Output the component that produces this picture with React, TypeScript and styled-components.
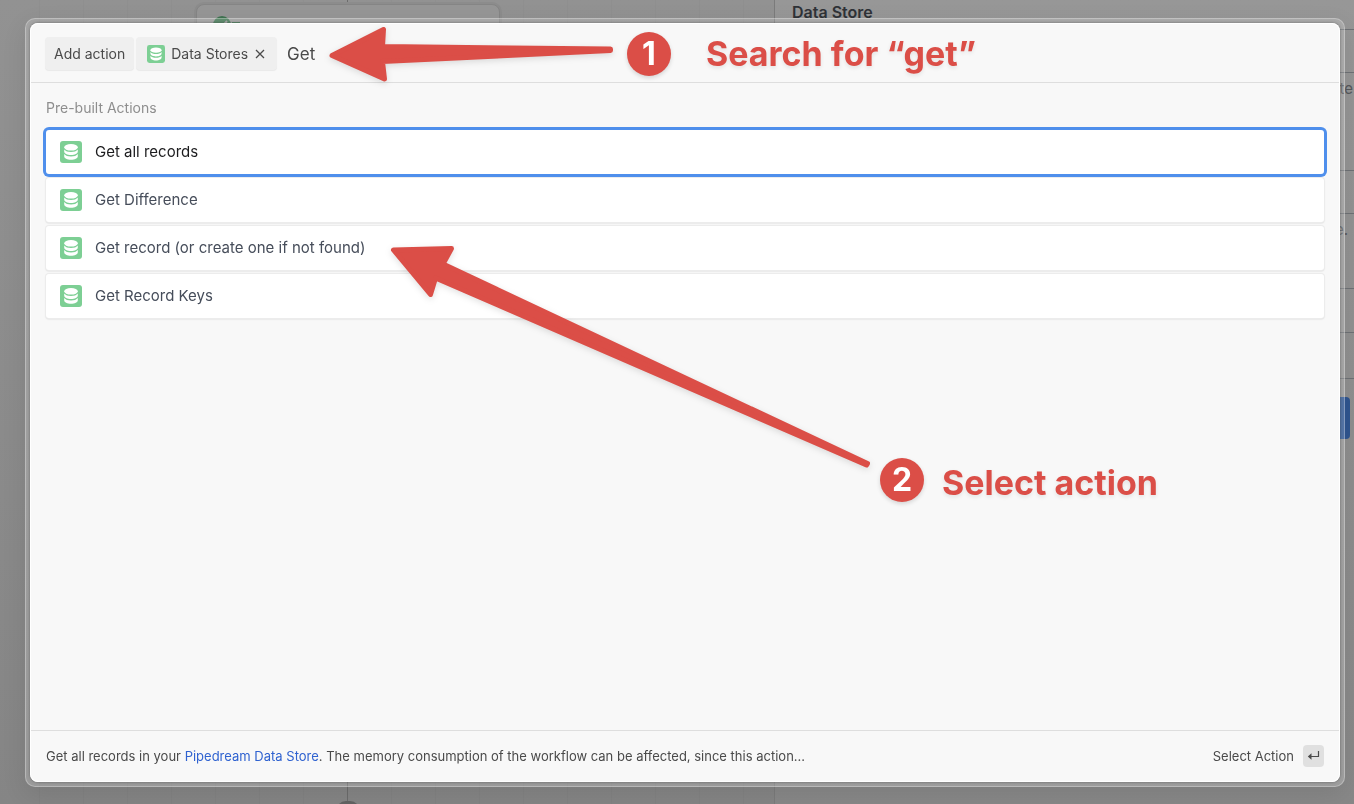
import React from 'react';
import styled, { createGlobalStyle } from 'styled-components';

const Global = createGlobalStyle`
  *, *::before, *::after { box-sizing: border-box; }
  body { margin: 0; font-family: Inter, "Liberation Sans", sans-serif; color: #4a4a4a; }
  button, input { font: inherit; color: inherit; }
`;

const Page = styled.div`
  display: grid;
  grid-template-columns: minmax(0, 774fr) minmax(0, 580fr);
  height: 100vh;
  overflow: hidden;
  background: linear-gradient(#929292, #858585);
`;

const Canvas = styled.section`
  display: flex;
  flex-direction: column;
  align-items: center;
  padding-right: 79px;
  background: repeating-linear-gradient(90deg, transparent 0 39px, #00000006 39px 40px, transparent 40px 44px);
`;

const Stem = styled.div<{ $grow?: boolean }>`
  width: 1px;
  flex: ${p => (p.$grow ? '1' : '0 0 4px')};
  background: #6c6c6c;
`;

const StepCard = styled.div`
  width: 304px;
  height: 76px;
  padding: 11px 16px;
  display: flex;
  align-items: flex-start;
  border: 1px solid #858585;
  border-radius: 8px;
  box-shadow: 0 0 0 2px #8c8c8c;
  background: #969696;
`;

const AddDot = styled.div`
  width: 24px;
  height: 24px;
  margin-bottom: -21px;
  flex: none;
  border-radius: 10px;
  background: #636363;
`;

const SidePanel = styled.aside`
  border-left: 1px solid #7b7b7b;
  background: linear-gradient(#979797, #888888);
  overflow: hidden;
`;

const SideTitle = styled.h2`
  margin: 0;
  height: 29px;
  padding: 0 17px;
  font-size: 16px;
  line-height: 24px;
  font-weight: 600;
  color: #2f3237;
`;

const SideField = styled.div<{ $height: number }>`
  height: ${p => p.$height}px;
  padding: 4px 1px;
  border-top: 1px solid #6e7175;
  font-size: 15px;
  line-height: 24px;
  text-align: right;
  color: #55585c;
`;

const SideHint = styled.span`
  padding-right: 5px;
`;

const SideButton = styled.button`
  display: block;
  width: 160px;
  height: 42px;
  margin: -26px 4px 0 auto;
  border: 0;
  border-radius: 4px;
  background: #2f5590;
`;

const Overlay = styled.div`
  position: fixed;
  inset: 0;
  padding: 18px 9px 17px 25px;
  display: flex;
`;

const Frame = styled.div`
  flex: 1;
  min-width: 0;
  display: flex;
  padding: 4px;
  border: 1px solid #ffffff48;
  border-radius: 10px;
  background: #ffffff2c;
  box-shadow: 0 8px 24px #00000018;
`;

const Dialog = styled.main`
  flex: 1;
  min-width: 0;
  display: flex;
  flex-direction: column;
  padding: 0 1px;
  border-radius: 8px;
  background: #f8f8f8;
  box-shadow: inset 0 0 0 1px #ffffff, 0 0 3px #00000060;
`;

const SearchBar = styled.header`
  height: 60px;
  padding: 2px 14px 0;
  display: flex;
  align-items: center;
  gap: 2px;
  border-bottom: 1px solid #dedede;
`;

const Chip = styled.button<{ $wide?: boolean }>`
  height: 33px;
  display: flex;
  align-items: center;
  gap: 6px;
  padding: ${p => (p.$wide ? '0 11px' : '0 9px')};
  border: 0;
  border-radius: 4px;
  background: #efefef;
  box-shadow: 0 1px 1px #00000010;
  font-size: 14px;
  line-height: 20px;
  white-space: nowrap;
`;

const SearchInput = styled.input`
  flex: 1;
  min-width: 0;
  height: 32px;
  padding: 0 8px;
  border: 0;
  outline: 0;
  background: transparent;
  font-size: 17px;
`;

const Results = styled.section`
  flex: 1;
  padding: 14px 15px 0;
`;

const GroupTitle = styled.h3`
  margin: 0 0 11px;
  font-size: 14px;
  line-height: 22px;
  font-weight: 400;
  color: #8e8e8e;
`;

const ResultList = styled.ul`
  margin: 0;
  padding: 0;
  display: flex;
  flex-direction: column;
  gap: 4px;
  list-style: none;
`;

const Result = styled.button<{ $active?: boolean }>`
  width: 100%;
  height: 44px;
  display: flex;
  align-items: center;
  gap: 13px;
  padding: 0 14px;
  border: 0;
  border-radius: 3px;
  background: #fff;
  box-shadow: ${p => (p.$active ? '0 0 0 3px #4f8fec' : '0 0 0 1px #ececec, 0 1px 2px #00000030')};
  color: ${p => (p.$active ? '#1c1c1e' : '#464d5a')};
  font-size: 15px;
  line-height: 24px;
  text-align: left;
`;

const Footer = styled.footer`
  min-height: 52px;
  padding: 0 15px 1px;
  display: flex;
  align-items: center;
  justify-content: space-between;
  border-top: 1px solid #dedede;
  font-size: 13px;
  line-height: 20px;
`;

const Description = styled.p`
  margin: 0;
`;

const DocLink = styled.a`
  color: #2f62d0;
  text-decoration: none;
`;

const SubmitButton = styled.button`
  display: flex;
  align-items: center;
  gap: 9px;
  padding: 0;
  border: 0;
  background: none;
`;

const KeyCap = styled.kbd`
  width: 21px;
  height: 22px;
  display: grid;
  place-items: center;
  border-radius: 4px;
  background: #e0e0e0;
`;

const Arrows = styled.svg`
  position: absolute;
  left: 0;
  top: 0;
  pointer-events: none;
  filter: drop-shadow(0 2px 3px #00000020);
`;

const Note = styled.div<{ $x: number; $y: number }>`
  position: absolute;
  left: ${p => p.$x}px;
  top: ${p => p.$y}px;
  color: #db4e47;
  font-size: 34px;
  line-height: 44px;
  font-weight: 700;
  white-space: nowrap;
  text-shadow: 0 2px 4px #00000018;
  pointer-events: none;
`;

const NoteNumber = styled(Note)`
  width: 44px;
  height: 44px;
  border-radius: 50%;
  background: #db4e47;
  box-shadow: 0 2px 4px #00000025;
  color: #fff;
  font-size: 32px;
  text-align: center;
  text-shadow: none;
`;

function StoreIcon({ size = 22 }: { size?: number }) {
  return (
    <svg width={size} height={size} viewBox="0 0 22 22" aria-hidden="true">
      <rect width="22" height="22" rx="3" fill="#7dcf94" />
      <g fill="#fff">
        <ellipse cx="11" cy="6.300" rx="6.800" ry="3.300" />
        <path d="M4.200 8.500c1.300 1.700 3.700 2.500 6.800 2.500s5.500-.8 6.800-2.500v2c0 2-3 3.500-6.800 3.500s-6.800-1.500-6.800-3.500z" />
        <path d="M4.200 13c1.300 1.700 3.700 2.500 6.800 2.500s5.500-.8 6.800-2.500v2.200c0 2-3 3.600-6.800 3.600s-6.800-1.600-6.800-3.600z" />
      </g>
    </svg>
  );
}

const actions = ['Get all records', 'Get Difference', 'Get record (or create one if not found)', 'Get Record Keys'];

export default function App() {
  return (
    <>
      <Global />
      <Page>
        <Canvas>
          <Stem />
          <StepCard>
            <svg width="34" height="18" viewBox="0 0 34 18" aria-hidden="true">
              <circle cx="9" cy="9" r="9" fill="#3f7350" />
              <path d="M5 9l3 3 6-7" fill="none" stroke="#969696" strokeWidth="2" />
              <rect x="19" y="6" width="8" height="8" fill="#3f7350" />
            </svg>
          </StepCard>
          <Stem $grow />
          <AddDot />
        </Canvas>
        <SidePanel>
          <SideTitle>Data Store</SideTitle>
          <SideField $height={43} />
          <SideField $height={98}>te</SideField>
          <SideField $height={43} />
          <SideField $height={75}><SideHint>e.</SideHint></SideField>
          <SideField $height={44} />
          <SideField $height={46} />
          <SideField $height={45} />
          <SideButton aria-label="Continue" />
        </SidePanel>
      </Page>
      <Overlay>
        <Frame>
          <Dialog>
            <SearchBar>
              <Chip>Add action</Chip>
              <Chip $wide>
                <StoreIcon size={18} />
                Data Stores
                <svg width="12" height="12" viewBox="0 0 12 12" aria-hidden="true">
                  <path d="M2 2l8 8M10 2l-8 8" stroke="#4a4a4a" strokeWidth="1.300" />
                </svg>
              </Chip>
              <SearchInput aria-label="Search actions" defaultValue="Get" />
            </SearchBar>
            <Results>
              <GroupTitle>Pre-built Actions</GroupTitle>
              <ResultList>
                {actions.map((name, i) => (
                  <li key={name}>
                    <Result $active={i === 0}>
                      <StoreIcon />
                      {name}
                    </Result>
                  </li>
                ))}
              </ResultList>
            </Results>
            <Footer>
              <Description>
                Get all records in your <DocLink href="#data-store">Pipedream Data Store</DocLink>. The memory
                consumption of the workflow can be affected, since this action...
              </Description>
              <SubmitButton>
                Select Action
                <KeyCap>
                  <svg width="13" height="12" viewBox="0 0 13 12" aria-hidden="true">
                    <path d="M11.500 1v5.500H3" fill="none" stroke="#4a4a4a" strokeWidth="1.200" />
                    <path d="M.8 6.500L4.500 3.300v6.400z" fill="#4a4a4a" />
                  </svg>
                </KeyCap>
              </SubmitButton>
            </Footer>
          </Dialog>
        </Frame>
        <Arrows width="900" height="500" viewBox="0 0 900 500" aria-hidden="true">
          <g fill="#db4e47" stroke="#db4e47" strokeLinejoin="round">
            <path d="M332 55.500L383.500 29.500L382.500 46.500L610.500 49L610.500 50.500L382.500 61.500L384.500 79Z" strokeWidth="5" />
            <path d="M393.500 250L451.500 248.500L443 264L867.500 463.500L866.500 465L435.500 278L430.500 294.500Z" strokeWidth="5" />
          </g>
        </Arrows>
        <NoteNumber $x={627} $y={32}>1</NoteNumber>
        <Note $x={706} $y={32}>Search for “get”</Note>
        <NoteNumber $x={880} $y={458}>2</NoteNumber>
        <Note $x={942} $y={461}>Select action</Note>
      </Overlay>
    </>
  );
}
